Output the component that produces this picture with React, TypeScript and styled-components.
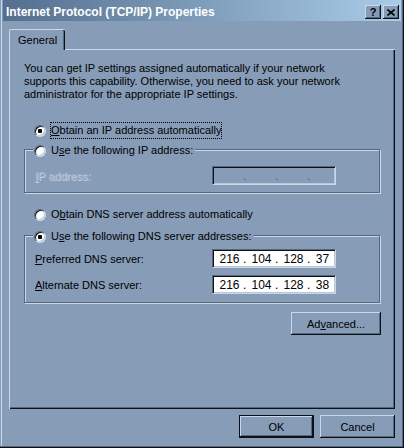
import React from "react";
import styled, { createGlobalStyle } from "styled-components";

const C = {
  face: "#879cb7",
  light: "#cad7e6",
  shadow: "#56677e",
  dark: "#0d1117",
  gray: "#a3b3c7",
};

const Global = createGlobalStyle`
  html, body { margin: 0; padding: 0; background: ${C.face}; }
  * { box-sizing: border-box; }
`;

const Window = styled.div`
  width: 404px;
  height: 448px;
  background: ${C.face};
  display: flex;
  flex-direction: column;
  padding: 0 3px 3px 3px;
  box-shadow: inset -1px -1px 0 ${C.dark}, inset -2px -2px 0 ${C.shadow},
    inset 1px 0 0 ${C.face}, inset 2px 0 0 ${C.light};
  color: #000;
  font-family: "Liberation Sans", Arial, sans-serif;
  font-size: 11px;
`;

const TitleBar = styled.div`
  height: 21px;
  padding: 3px 2px 0 3px;
  background: linear-gradient(to right, #546e8e, #a9cce8);
  display: flex;
  align-items: center;
  gap: 2px;
`;

const Title = styled.div`
  flex: 1;
  color: #fff;
  font-weight: bold;
  font-size: 12px;
  white-space: nowrap;
`;

const CaptionButton = styled.div`
  width: 16px;
  height: 14px;
  background: ${C.face};
  display: flex;
  align-items: center;
  justify-content: center;
  box-shadow: inset -1px -1px 0 ${C.dark}, inset 1px 1px 0 ${C.light},
    inset -2px -2px 0 ${C.shadow};
  font-weight: bold;
  font-size: 11px;
  line-height: 1;
  color: #000;
`;

const TabStrip = styled.div`
  margin: 8px 6px 0 6px;
  display: flex;
  position: relative;
  z-index: 1;
`;

const Tab = styled.div`
  height: 21px;
  margin-bottom: -1px;
  padding: 0 8px 1px 8px;
  display: flex;
  align-items: center;
  background: ${C.face};
  border-left: 1px solid ${C.light};
  border-top: 1px solid ${C.light};
  border-top-left-radius: 2px;
  border-top-right-radius: 2px;
  box-shadow: inset -1px 0 0 ${C.dark}, inset -2px 0 0 ${C.shadow};
`;

const Panel = styled.div`
  flex: 1;
  margin: 0 6px;
  border-left: 1px solid ${C.light};
  border-top: 1px solid ${C.light};
  box-shadow: inset -1px -1px 0 ${C.dark}, inset -2px -2px 0 ${C.shadow};
  padding: 12px 14px 0 14px;
  display: flex;
  flex-direction: column;
`;

const Paragraph = styled.p`
  margin: 0;
  line-height: 13px;
`;

const RadioLine = styled.div<{ $mt: number }>`
  display: flex;
  align-items: center;
  height: 17px;
  margin-top: ${(p) => p.$mt}px;
  padding-left: 10px;
  gap: 4px;
`;

const Legend = styled.div`
  display: flex;
  align-items: center;
  height: 17px;
  width: fit-content;
  margin: -8px 0 0 8px;
  padding: 0 1px 0 1px;
  gap: 4px;
  background: ${C.face};
`;

const Radio = styled.span<{ $checked?: boolean }>`
  flex: none;
  width: 12px;
  height: 12px;
  border-radius: 50%;
  border: 1px solid;
  border-color: ${C.shadow} ${C.light} ${C.light} ${C.shadow};
  background: #fff;
  box-shadow: inset 1px 1px 0 ${C.dark}, inset -1px -1px 0 #b9c7d8;
  display: flex;
  align-items: center;
  justify-content: center;
  &::after {
    content: "";
    width: 4px;
    height: 4px;
    border-radius: 1px;
    background: ${(p) => (p.$checked ? "#000" : "transparent")};
  }
`;

const Label = styled.span<{ $focus?: boolean }>`
  border: 1px dotted ${(p) => (p.$focus ? "#000" : "transparent")};
  line-height: 15px;
  white-space: nowrap;
`;

const Group = styled.div<{ $mt: number; $pb: number }>`
  margin-top: ${(p) => p.$mt}px;
  margin-right: 1px;
  padding-bottom: ${(p) => p.$pb}px;
  border: 1px solid ${C.shadow};
  box-shadow: inset 1px 1px 0 ${C.light}, 1px 1px 0 ${C.light};
`;

const FieldRow = styled.div<{ $mt: number }>`
  display: grid;
  grid-template-columns: 177px 124px;
  align-items: center;
  margin-top: ${(p) => p.$mt}px;
  padding-left: 10px;
`;

const FieldLabel = styled.span<{ $disabled?: boolean }>`
  white-space: nowrap;
  color: ${(p) => (p.$disabled ? C.gray : "#000")};
  text-shadow: ${(p) => (p.$disabled ? `1px 1px 0 #c3d0df` : "none")};
`;

const IpBox = styled.div<{ $disabled?: boolean }>`
  width: 124px;
  height: 19px;
  border: 1px solid;
  border-color: ${C.shadow} ${C.light} ${C.light} ${C.shadow};
  box-shadow: inset 1px 1px 0 ${C.dark}, inset -1px -1px 0 #b9c7d8;
  background: ${(p) => (p.$disabled ? C.face : "#fff")};
  display: flex;
  align-items: center;
  padding: 0 2px 0 3px;
  font-size: 12px;
  color: ${(p) => (p.$disabled ? C.shadow : "#000")};
`;

const Seg = styled.span<{ $last?: boolean }>`
  width: 27px;
  flex: ${(p) => (p.$last ? 1 : "none")};
  text-align: center;
`;

const Dot = styled.span`
  width: 5px;
  text-align: left;
`;

const Btn = styled.div<{ $w: number; $default?: boolean }>`
  width: ${(p) => p.$w}px;
  height: 23px;
  background: ${C.face};
  display: flex;
  align-items: center;
  justify-content: center;
  border: ${(p) => (p.$default ? `1px solid ${C.dark}` : "none")};
  box-shadow: inset -1px -1px 0 ${C.dark}, inset 1px 1px 0 ${C.light},
    inset -2px -2px 0 ${C.shadow};
`;

const AdvancedWrap = styled.div`
  margin-top: 9px;
  display: flex;
  justify-content: flex-end;
`;

const Footer = styled.div`
  display: flex;
  justify-content: flex-end;
  gap: 6px;
  margin: 6px 6px 7px 6px;
`;

function Ip({ parts, disabled }: { parts: string[]; disabled?: boolean }) {
  return (
    <IpBox $disabled={disabled}>
      <Seg>{parts[0]}</Seg>
      <Dot>.</Dot>
      <Seg>{parts[1]}</Seg>
      <Dot>.</Dot>
      <Seg>{parts[2]}</Seg>
      <Dot>.</Dot>
      <Seg $last>{parts[3]}</Seg>
    </IpBox>
  );
}

export default function App() {
  return (
    <>
      <Global />
      <Window>
        <TitleBar>
          <Title>Internet Protocol (TCP/IP) Properties</Title>
          <CaptionButton>?</CaptionButton>
          <CaptionButton>
            <svg width="8" height="7" viewBox="0 0 8 7">
              <path d="M0.5 0.5 L7.5 6.5 M7.5 0.5 L0.5 6.5" stroke="#000" strokeWidth="1.6" fill="none" />
            </svg>
          </CaptionButton>
        </TitleBar>
        <TabStrip>
          <Tab>General</Tab>
        </TabStrip>
        <Panel>
          <Paragraph>
            You can get IP settings assigned automatically if your network
            <br />
            supports this capability. Otherwise, you need to ask your network
            <br />
            administrator for the appropriate IP settings.
          </Paragraph>
          <RadioLine $mt={21}>
            <Radio $checked />
            <Label $focus>
              <u>O</u>btain an IP address automatically
            </Label>
          </RadioLine>
          <Group $mt={10} $pb={7}>
            <Legend>
              <Radio />
              <Label>
                U<u>s</u>e the following IP address:
              </Label>
            </Legend>
            <FieldRow $mt={7}>
              <FieldLabel $disabled>
                <u>I</u>P address:
              </FieldLabel>
              <Ip parts={["", "", "", ""]} disabled />
            </FieldRow>
          </Group>
          <RadioLine $mt={13}>
            <Radio />
            <Label>
              O<u>b</u>tain DNS server address automatically
            </Label>
          </RadioLine>
          <Group $mt={12} $pb={8}>
            <Legend>
              <Radio $checked />
              <Label>
                U<u>s</u>e the following DNS server addresses:
              </Label>
            </Legend>
            <FieldRow $mt={4}>
              <FieldLabel>
                <u>P</u>referred DNS server:
              </FieldLabel>
              <Ip parts={["216", "104", "128", "37"]} />
            </FieldRow>
            <FieldRow $mt={7}>
              <FieldLabel>
                <u>A</u>lternate DNS server:
              </FieldLabel>
              <Ip parts={["216", "104", "128", "38"]} />
            </FieldRow>
          </Group>
          <AdvancedWrap>
            <Btn $w={90}>
              Ad<u>v</u>anced...
            </Btn>
          </AdvancedWrap>
        </Panel>
        <Footer>
          <Btn $w={75} $default>
            OK
          </Btn>
          <Btn $w={75}>Cancel</Btn>
        </Footer>
      </Window>
    </>
  );
}
